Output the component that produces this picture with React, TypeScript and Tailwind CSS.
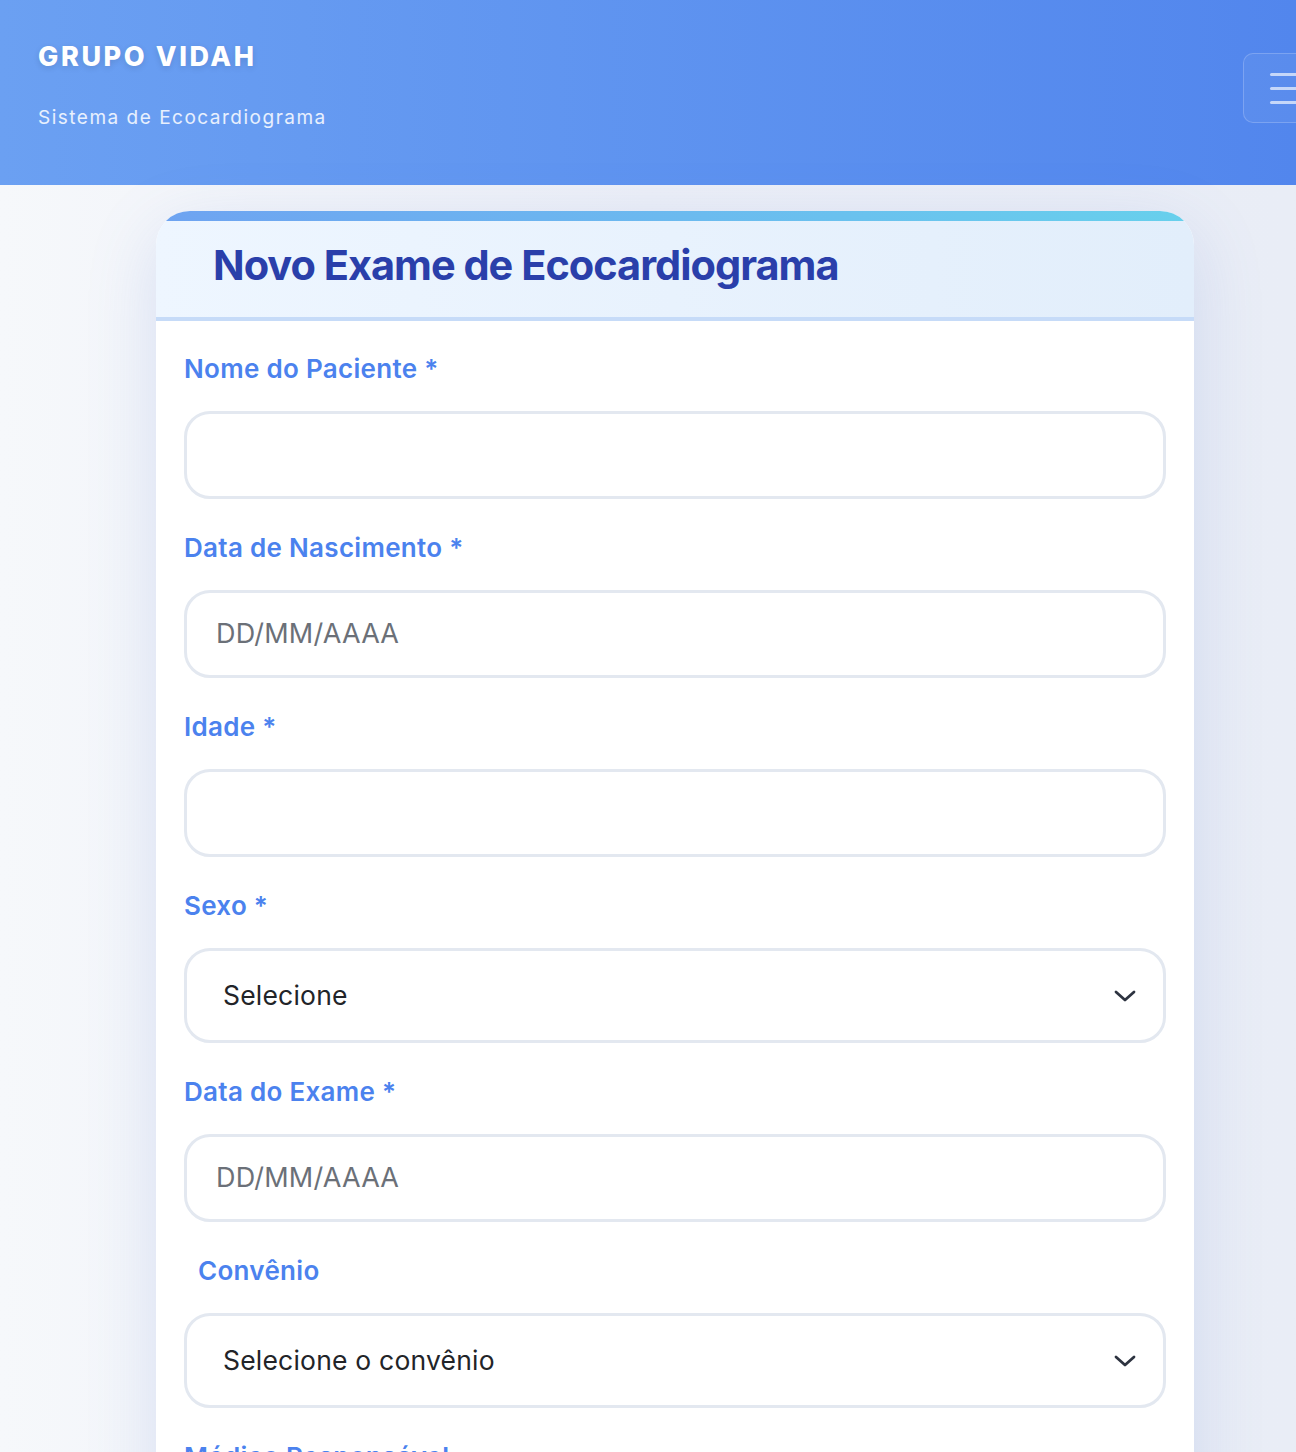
import React from "react";

const Chevron = () => (
  <svg width="24" height="14" viewBox="0 0 24 14" fill="none" className="shrink-0">
    <path d="M3 3l9 8 9-8" stroke="#2d3340" strokeWidth="2.8" strokeLinecap="round" strokeLinejoin="round" />
  </svg>
);

const Label = ({ children, className = "" }: { children: React.ReactNode; className?: string }) => (
  <div className={"text-[26px] leading-[36px] font-semibold tracking-[0.3px] text-[#4b82ee] " + className}>{children}</div>
);

const TextInput = ({ placeholder = "" }: { placeholder?: string }) => (
  <div className="mt-6 h-[88px] rounded-[26px] border-[3px] border-[#e3e8f0] bg-white flex items-center pl-[29px]">
    <span className="text-[27px] tracking-[0.2px] text-[#6b7078]">{placeholder}</span>
  </div>
);

const SelectBox = ({ text }: { text: string }) => (
  <div className="mt-6 h-[95px] rounded-[26px] border-[3px] border-[#e3e8f0] bg-white flex items-center justify-between pl-[36px] pr-[26px]">
    <span className="text-[26.5px] tracking-[0.2px] text-[#222428]">{text}</span>
    <Chevron />
  </div>
);

export default function App() {
  return (
    <div
      className="min-h-[1452px] h-[1452px] overflow-hidden bg-gradient-to-r from-[#f6f8fb] via-[#eceff7] to-[#e9edf6]"
      style={{ fontFamily: "Inter, 'Noto Sans', sans-serif" }}
    >
      <header className="h-[185px] bg-gradient-to-r from-[#6ba0f2] to-[#5286ed] flex justify-between overflow-hidden">
        <div className="pl-[38px] pt-[40px]">
          <div className="text-[27px] leading-[34px] font-extrabold tracking-[2.6px] text-white [text-shadow:0_2px_6px_rgba(0,0,0,0.12)]">
            GRUPO VIDAH
          </div>
          <div className="mt-[32px] text-[19px] leading-[24px] tracking-[1.5px] text-white/85">
            Sistema de Ecocardiograma
          </div>
        </div>
        <div className="mt-[53px] mr-[-17px] h-[70px] w-[70px] shrink-0 rounded-[10px] border-[1.5px] border-white/20 bg-white/5 flex flex-col justify-center gap-[11px] pl-[26px]">
          <div className="h-[3px] w-[40px] rounded-full bg-white/65" />
          <div className="h-[3px] w-[40px] rounded-full bg-white/65" />
          <div className="h-[3px] w-[40px] rounded-full bg-white/65" />
        </div>
      </header>

      <div className="ml-[156px] mt-[26px] w-[1038px] rounded-t-[34px] overflow-hidden bg-white shadow-[0_20px_70px_rgba(90,120,210,0.18)]">
        <div className="h-[10px] bg-gradient-to-r from-[#6ea3f1] to-[#67d0ec]" />
        <div className="h-[100px] bg-gradient-to-r from-[#eef6ff] to-[#e2eefb] border-b-4 border-[#c6dbf8] flex items-center pl-[57px] pb-[8px]">
          <h1 className="text-[41.5px] leading-[52px] font-bold tracking-[-1px] text-[#2a3faa]">
            Novo Exame de Ecocardiograma
          </h1>
        </div>
        <div className="px-[28px] pt-[30px] pb-[40px] flex flex-col gap-[31px]">
          <div>
            <Label>Nome do Paciente *</Label>
            <TextInput />
          </div>
          <div>
            <Label>Data de Nascimento *</Label>
            <TextInput placeholder="DD/MM/AAAA" />
          </div>
          <div>
            <Label>Idade *</Label>
            <TextInput />
          </div>
          <div>
            <Label>Sexo *</Label>
            <SelectBox text="Selecione" />
          </div>
          <div>
            <Label>Data do Exame *</Label>
            <TextInput placeholder="DD/MM/AAAA" />
          </div>
          <div>
            <Label className="pl-[14px]">Convênio</Label>
            <SelectBox text="Selecione o convênio" />
          </div>
          <div>
            <Label>Médico Responsável</Label>
            <TextInput />
          </div>
        </div>
      </div>
    </div>
  );
}
